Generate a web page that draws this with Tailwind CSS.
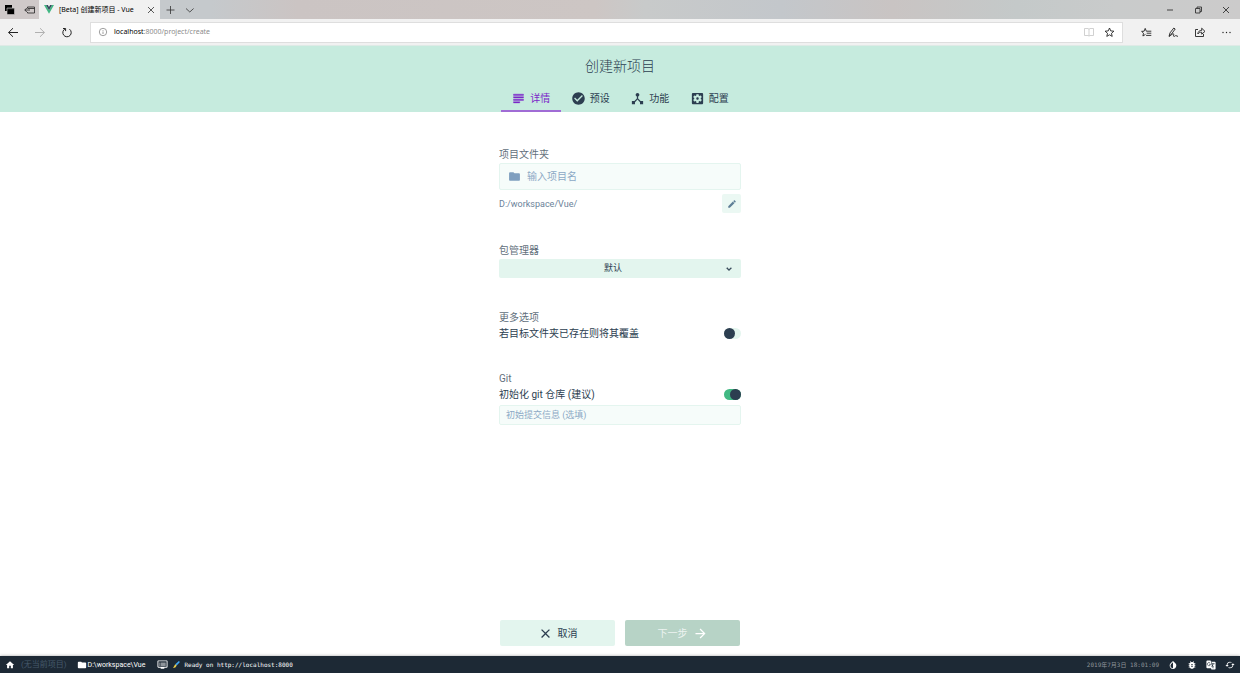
<!DOCTYPE html>
<html lang="zh-CN">
<head>
<meta charset="utf-8">
<title>[Beta] 创建新项目 - Vue</title>
<script src="https://cdn.jsdelivr.net/npm/@tailwindcss/browser@4"></script>
</head>
<body class="flex h-screen flex-col overflow-hidden bg-white font-['Roboto','Noto_Sans_CJK_SC',sans-serif] text-[10px] text-[#2c3e50]">

<!-- Browser tab strip -->
<div class="flex h-[19px] shrink-0 items-stretch bg-[linear-gradient(90deg,#c5c9cc_0%,#c5c9cc_17%,#cbc4c3_24%,#cdc6c4_48%,#c8caca_52%,#c3c7cb_63%,#c9c4c3_72%,#c4c9c9_82%,#c9cbcb_90%,#cccbcb_100%)] font-['Noto_Sans','Noto_Sans_CJK_SC',sans-serif] text-black">
  <div class="flex w-[39px] items-center gap-2 bg-[#cfc9c9] pl-1">
    <button aria-label="已搁置的标签页"><svg class="size-3" viewBox="0 0 12 12"><path d="M1 1h7v6H1z"/><path d="M3 4h7.500v6.500H3z" stroke="#cfc9c9" stroke-width=".6"/><path d="M3 4.700h7" stroke="#888" stroke-width=".6"/></svg></button>
    <button aria-label="搁置标签页"><svg class="size-3" viewBox="0 0 12 12" fill="none" stroke="#222" stroke-width=".8"><path d="M3.500 4V3h7v6h-7V8M3.500 4.500h7M.8 6H6M2.800 4 .8 6l2 2"/></svg></button>
  </div>
  <div class="flex w-[121px] items-center bg-[#f1f1f1] pr-[3px] pl-[5px]">
    <svg class="mr-[5px] h-[9px] w-[10px] shrink-0" viewBox="0 0 10 9"><path d="M0 0h2l3 5.200L8 0h2L5 8.700z" fill="#41b883"/><path d="M2 0h1.900L5 1.900 6.100 0H8L5 5.200z" fill="#35495e"/></svg>
    <span class="pt-px text-[7px] whitespace-nowrap">[Beta] 创建新项目 - Vue</span>
    <button class="ml-auto" aria-label="关闭标签页"><svg class="size-3" viewBox="0 0 12 12" stroke="#333" stroke-width=".8"><path d="m3 3 6 6M9 3 3 9"/></svg></button>
  </div>
  <div class="flex items-center gap-2 pl-1">
    <button aria-label="新建标签页"><svg class="size-3" viewBox="0 0 12 12" stroke="#333" stroke-width=".8"><path d="M6.500 2v8M2.500 6h8"/></svg></button>
    <button aria-label="标签页预览"><svg class="size-3" viewBox="0 0 12 12" fill="none" stroke="#333" stroke-width=".8"><path d="m2 4.500 3.800 3.500 3.800-3.500"/></svg></button>
  </div>
  <div class="ml-auto flex items-center gap-4 pr-2">
    <button aria-label="最小化"><svg class="size-3" viewBox="0 0 12 12" stroke="#333" stroke-width=".9"><path d="M3 6h6"/></svg></button>
    <button aria-label="还原"><svg class="size-3" viewBox="0 0 12 12" fill="none" stroke="#333" stroke-width=".9"><path d="M3.500 4.500H8V9H3.500zM5 4.500V3h4.500v4.500H8"/></svg></button>
    <button aria-label="关闭"><svg class="size-3" viewBox="0 0 12 12" stroke="#333" stroke-width=".9"><path d="m3 3 6 6M9 3 3 9"/></svg></button>
  </div>
</div>

<!-- Browser toolbar -->
<div class="flex h-[27px] shrink-0 items-center border-b border-[#dfeae6] bg-[#f1f1f1] px-[7px] font-['Noto_Sans','Noto_Sans_CJK_SC',sans-serif]">
  <div class="flex w-[83px] shrink-0 items-center gap-[15px]">
    <button aria-label="后退"><svg class="size-3" viewBox="0 0 12 12" fill="none" stroke="#222"><path d="M1.500 6.500H11M6 2.200 1.600 6.500 6 10.800"/></svg></button>
    <button aria-label="前进" disabled><svg class="size-3" viewBox="0 0 12 12" fill="none" stroke="#b0b0b0"><path d="M1 6.500h9.500M6 2.200 10.400 6.500 6 10.800"/></svg></button>
    <button aria-label="刷新"><svg class="size-3" viewBox="0 0 12 12" fill="none" stroke="#222"><path d="M4 2.900a4.200 4.200 0 1 0 4.500.3M2 2.500h2.600v2.600"/></svg></button>
  </div>
  <div class="flex h-[21px] grow items-center border border-[#dedede] bg-white px-[7px]">
    <svg class="mr-[6px] size-[10px]" viewBox="0 0 10 10" fill="none" stroke="#777" stroke-width=".7"><circle cx="5" cy="5" r="3.700"/><path d="M5 4.500V7M5 3v.8"/></svg>
    <a href="http://localhost:8000/project/create" class="text-[7px] leading-4 text-[#8c8c8c]"><span class="text-black">localhost</span>:8000/project/create</a>
    <svg class="mr-2 ml-auto size-3" viewBox="0 0 12 12" fill="none" stroke="#c5c5c5" stroke-width=".8"><path d="M6 3v7M1.500 2.500H5l1 .7 1-.7h3.500v7H7l-1 .6-1-.6H1.500z"/></svg>
    <button aria-label="添加到收藏夹"><svg class="size-3" viewBox="0 0 12 12" fill="none" stroke="#222" stroke-width=".9"><path d="m6.500 2 1.250 2.900 3.150.3L8.500 7.300l.7 3.100L6.500 8.800l-2.700 1.600.7-3.100L2.100 5.200l3.150-.3z"/></svg></button>
  </div>
  <div class="ml-[17px] flex shrink-0 items-center gap-[15px]">
    <button aria-label="收藏夹"><svg class="size-3" viewBox="0 0 12 12" fill="none" stroke="#222" stroke-width=".9"><path d="M6.300 5.200 5.200 2.400 4.100 5.200l-2.500.2 1.900 1.800-.6 2.800 2.600-1.600M6.300 5.200h5M6.700 7.200h4.600M6.100 9.400h5.200"/></svg></button>
    <button aria-label="添加笔记"><svg class="size-3" viewBox="0 0 12 12" fill="none" stroke="#222" stroke-width=".9"><path d="M2 10.400 3 6.900 6.800 2l1.400 1-3.700 5zM2 10.400c3-2 4-3 4.600-2.500S5.600 10.400 7 10.400s1-1 2-.8 1 .8 2 .8"/></svg></button>
    <button aria-label="共享"><svg class="size-3" viewBox="0 0 12 12" fill="none" stroke="#222" stroke-width=".9"><path d="M4 3.500H1.500v7h8V8M3.800 8c.3-2.600 1.700-3.600 3.900-3.600V2.200L11 5.400 7.700 8.200V6.200C6 6.200 5 6.500 3.800 8z"/></svg></button>
    <button aria-label="设置及其他"><svg class="size-3" viewBox="0 0 12 12" fill="#222"><circle cx="2" cy="6.500" r=".7"/><circle cx="5.500" cy="6.500" r=".7"/><circle cx="9" cy="6.500" r=".7"/></svg></button>
  </div>
</div>

<!-- Page header with wizard tabs -->
<header class="flex h-[66px] shrink-0 flex-col items-center justify-between bg-[#c6ebde] pt-2">
  <h1 class="text-[14px] leading-6 font-light">创建新项目</h1>
  <nav class="grid h-[26px] w-[238px] grid-cols-4">
    <a href="#details" class="flex items-center justify-center gap-1 border-b-2 border-[#a06cd5] pt-px text-[#7c27c9]">
      <svg class="size-[15px]" viewBox="0 0 24 24" fill="currentColor"><path d="M14 17H4v2h10v-2zm6-8H4v2h16V9zM4 15h16v-2H4v2zM4 5v2h16V5H4z" stroke="currentColor" stroke-width=".6"/></svg>详情</a>
    <a href="#presets" class="flex items-center justify-center gap-1 border-b-2 border-transparent pt-px">
      <svg class="size-[15px]" viewBox="0 0 24 24" fill="currentColor"><path d="M12 2C6.480 2 2 6.480 2 12s4.480 10 10 10 10-4.480 10-10S17.520 2 12 2zm-2 15l-5-5 1.410-1.410L10 14.170l7.590-7.590L19 8l-9 9z"/></svg>预设</a>
    <a href="#features" class="flex items-center justify-center gap-1 border-b-2 border-transparent pt-px">
      <svg class="size-[15px]" viewBox="0 0 24 24" fill="currentColor"><path d="M17 16l-4-4V8.820C14.160 8.400 15 7.300 15 6c0-1.660-1.340-3-3-3S9 4.340 9 6c0 1.300.84 2.400 2 2.820V12l-4 4H3v5h5v-3.050l4-4.200 4 4.200V21h5v-5h-4z"/></svg>功能</a>
    <a href="#config" class="flex items-center justify-center gap-1 border-b-2 border-transparent pt-px">
      <svg class="size-[15px]" viewBox="0 0 24 24" fill="currentColor"><path d="M12 10c-1.100 0-2 .9-2 2s.9 2 2 2 2-.9 2-2-.9-2-2-2zm7-7H5c-1.110 0-2 .9-2 2v14c0 1.100.89 2 2 2h14c1.110 0 2-.9 2-2V5c0-1.100-.89-2-2-2zm-1.750 9c0 .23-.02.46-.05.68l1.480 1.160c.13.11.17.3.08.45l-1.400 2.420c-.09.15-.27.21-.43.15l-1.740-.7c-.36.28-.76.51-1.180.69l-.26 1.850c-.03.17-.18.3-.35.3h-2.800c-.17 0-.32-.13-.35-.29l-.26-1.850c-.43-.18-.82-.41-1.180-.69l-1.740.7c-.16.06-.34 0-.43-.15l-1.400-2.420c-.09-.15-.05-.34.08-.45l1.480-1.160c-.03-.23-.05-.46-.05-.69 0-.23.02-.46.05-.68l-1.480-1.160c-.13-.11-.17-.3-.08-.45l1.400-2.420c.09-.15.27-.21.43-.15l1.740.7c.36-.28.76-.51 1.180-.69l.26-1.850c.03-.17.18-.3.35-.3h2.800c.17 0 .32.13.35.29l.26 1.850c.43.18.82.41 1.180.69l1.740-.7c.16-.06.34 0 .43.15l1.400 2.420c.09.15.05.34-.08.45l-1.480 1.160c.03.23.05.46.05.69z"/></svg>配置</a>
  </nav>
</header>

<!-- Project details form -->
<main class="min-h-0 grow overflow-auto pt-[34px]">
  <form id="project" class="mx-auto flex w-[242px] flex-col leading-4">
    <section>
      <label for="folder" class="block pt-px opacity-75">项目文件夹</label>
      <div class="flex h-[27px] items-center gap-[6px] rounded-xs border border-[#e4f5ef] bg-[#f6fcfa] px-2 text-[#7f9fbf]">
        <svg class="size-[13px] shrink-0" viewBox="0 0 24 24" fill="currentColor"><path d="M10 4H4c-1.100 0-1.990.9-1.990 2L2 18c0 1.100.9 2 2 2h16c1.100 0 2-.9 2-2V8c0-1.100-.9-2-2-2h-8l-2-2z"/></svg>
        <input id="folder" type="text" placeholder="输入项目名" class="min-w-0 grow bg-transparent pt-px text-[10px] outline-none placeholder:text-[#8ca9c5]">
      </div>
      <div class="mt-1 flex items-center justify-between text-[9px] text-[#6b8299]">
        <span>D:/workspace/Vue/</span>
        <button type="button" aria-label="编辑路径" class="grid size-[19px] place-items-center rounded-xs bg-[#ebf8f3]">
          <svg class="size-[10px]" viewBox="0 0 24 24" fill="#5f7f97"><path d="M3 17.250V21h3.750L17.810 9.940l-3.750-3.750L3 17.250zM20.710 7.040c.39-.39.39-1.020 0-1.410l-2.340-2.340c-.39-.39-1.020-.39-1.410 0l-1.830 1.830 3.750 3.750 1.830-1.830z"/></svg>
        </button>
      </div>
    </section>

    <section class="mt-[29px]">
      <label for="manager" class="block pt-px opacity-75">包管理器</label>
      <div class="grid items-center rounded-xs bg-[#e3f5ee]">
        <select id="manager" class="col-start-1 row-start-1 h-[19px] w-full appearance-none bg-transparent pr-[14px] pb-px text-[9px] [text-align-last:center]"><option>默认</option></select>
        <svg class="pointer-events-none col-start-1 row-start-1 mr-[7px] size-[10px] justify-self-end" viewBox="0 0 24 24" fill="currentColor"><path d="M16.590 8.590L12 13.170 7.410 8.590 6 10l6 6 6-6z" stroke="currentColor"/></svg>
      </div>
    </section>

    <section class="mt-[31px]">
      <h2 class="pt-px opacity-75">更多选项</h2>
      <div class="flex items-center justify-between">
        <label for="overwrite">若目标文件夹已存在则将其覆盖</label>
        <input id="overwrite" type="checkbox" class="mb-px flex h-[11px] w-[17px] appearance-none items-center rounded-full bg-[#e3f5ee] before:size-[11px] before:rounded-full before:bg-[#2c3e50] checked:justify-end checked:bg-[#42b983]">
      </div>
    </section>

    <section class="mt-[28px]">
      <h2 class="pt-px opacity-75">Git</h2>
      <div class="flex items-center justify-between">
        <label for="git">初始化 git 仓库 (建议)</label>
        <input id="git" type="checkbox" checked class="mb-px flex h-[11px] w-[17px] appearance-none items-center rounded-full bg-[#e3f5ee] before:size-[11px] before:rounded-full before:bg-[#2c3e50] checked:justify-end checked:bg-[#42b983]">
      </div>
      <input type="text" aria-label="初始提交信息" placeholder="初始提交信息 (选填)" class="mt-[2px] block h-5 w-full rounded-xs border border-[#e4f5ef] bg-[#f6fcfa] px-[6px] text-[9px] outline-none placeholder:text-[#8ca9c5]">
    </section>
  </form>
</main>

<!-- Wizard actions -->
<div class="flex shrink-0 justify-center gap-[10px] pb-[10px]">
  <button type="button" class="flex h-[26px] w-[115px] items-center justify-center gap-[5px] rounded-xs bg-[#e3f5ee]">
    <svg class="size-[15px]" viewBox="0 0 24 24" fill="currentColor"><path d="M19 6.410L17.590 5 12 10.590 6.410 5 5 6.410 10.590 12 5 17.590 6.410 19 12 13.410 17.590 19 19 17.590 13.410 12z"/></svg>取消</button>
  <button type="submit" form="project" disabled class="flex h-[26px] w-[115px] items-center justify-center gap-[5px] rounded-xs bg-[#b7d3c6] text-white">
    <span class="opacity-75">下一步</span><svg class="size-[15px]" viewBox="0 0 24 24" fill="currentColor"><path d="M12 4l-1.410 1.410L16.170 11H4v2h12.170l-5.580 5.590L12 20l8-8z"/></svg></button>
</div>

<!-- Status bar -->
<footer class="flex h-[17px] shrink-0 items-center bg-[#1d2935] px-[5px] text-[7px] text-white shadow-[0_0_3px_rgba(0,0,0,0.35)]">
  <a href="#home" aria-label="主页"><svg class="size-[10px]" viewBox="0 0 24 24" fill="currentColor"><path d="M10 20v-6h4v6h5v-8h3L12 3 2 12h3v8z"/></svg></a>
  <span class="ml-[6px] text-[8px] text-[#46596b]">(无当前项目)</span>
  <svg class="mr-px ml-[10px] size-[10px]" viewBox="0 0 24 24" fill="currentColor"><path d="M10 4H4c-1.100 0-1.990.9-1.990 2L2 18c0 1.100.9 2 2 2h16c1.100 0 2-.9 2-2V8c0-1.100-.9-2-2-2h-8l-2-2z"/></svg>
  <span class="pt-px">D:\workspace\Vue</span>
  <button aria-label="日志" class="ml-[12px]"><svg class="size-[11px]" viewBox="0 0 24 24" fill="currentColor"><path d="M21 3H3c-1.100 0-2 .9-2 2v12c0 1.100.9 2 2 2h5v2h8v-2h5c1.100 0 1.990-.9 1.990-2L23 5c0-1.100-.9-2-2-2zm0 14H3V5h18v12zm-2-9H8v2h11V8zm0 4H8v2h11v-2zM7 8H5v2h2V8zm0 4H5v2h2v-2z"/></svg></button>
  <svg class="mr-1 ml-[5px] size-[7px]" viewBox="0 0 7 7"><path d="M2.300 3.200 5.900 0l1 .9L3.700 4.600z" fill="#3fa9f5"/><path d="M2.300 3.200 3.700 4.600 2.300 6.400 0 6.900z" fill="#f0d24a"/></svg>
  <span class="font-['DejaVu_Sans_Mono',monospace] text-[6px]">Ready on http://localhost:8000</span>
  <span class="mr-[9px] ml-auto font-['DejaVu_Sans_Mono','Noto_Sans_CJK_SC',monospace] text-[6px] text-[#8e949a]">2019年7月3日 18:01:09</span>
  <div class="flex gap-[9px]">
    <button aria-label="切换主题"><svg class="size-[10px]" viewBox="0 0 24 24" fill="currentColor"><path d="M17.660 7.930L12 2.270 6.340 7.930c-3.120 3.120-3.120 8.190 0 11.310C7.900 20.800 9.950 21.580 12 21.580c2.050 0 4.100-.78 5.660-2.340 3.120-3.120 3.120-8.190 0-11.310zM12 19.590c-1.600 0-3.110-.62-4.240-1.760C6.620 16.690 6 15.190 6 13.590s.62-3.110 1.760-4.240L12 5.100v14.490z"/></svg></button>
    <button aria-label="报告问题"><svg class="size-[10px]" viewBox="0 0 24 24" fill="currentColor"><path d="M20 8h-2.810c-.45-.78-1.070-1.450-1.820-1.960L17 4.410 15.590 3l-2.170 2.170C12.960 5.060 12.490 5 12 5s-.96.06-1.410.17L8.410 3 7 4.410l1.620 1.630C7.880 6.550 7.260 7.220 6.810 8H4v2h2.090c-.05.33-.09.66-.09 1v1H4v2h2v1c0 .34.04.67.09 1H4v2h2.810c1.040 1.790 2.970 3 5.190 3s4.150-1.210 5.190-3H20v-2h-2.090c.05-.33.09-.66.09-1v-1h2v-2h-2v-1c0-.34-.04-.67-.09-1H20V8zm-6 8h-4v-2h4v2zm0-4h-4v-2h4v2z"/></svg></button>
    <button aria-label="翻译"><svg class="size-[10px]" viewBox="0 0 24 24"><path d="M3 1h8l1 3h9c1 0 2 1 2 2v15c0 1-1 2-2 2h-8l-1-3H3c-1 0-2-1-2-2V3c0-1 1-2 2-2z" fill="currentColor"/><path d="M10 7.500a3.800 3.800 0 1 0 .8 3H7.500M13 9h8M17 7v2c0 3-2 6-4 7M14 11c1 3 3 4 5 6M13 5l4 15" fill="none" stroke="#1d2935" stroke-width="1.500"/></svg></button>
    <button aria-label="刷新数据"><svg class="size-[10px]" viewBox="0 0 24 24" fill="currentColor"><path d="M19 8l-4 4h3c0 3.310-2.690 6-6 6-1.010 0-1.970-.25-2.800-.7l-1.460 1.460C8.970 19.540 10.430 20 12 20c4.420 0 8-3.580 8-8h3l-4-4zM6 12c0-3.310 2.690-6 6-6 1.010 0 1.970.25 2.800.7l1.460-1.460C15.030 4.460 13.570 4 12 4c-4.420 0-8 3.580-8 8H1l4 4 4-4H6z"/></svg></button>
  </div>
</footer>
</body>
</html>
